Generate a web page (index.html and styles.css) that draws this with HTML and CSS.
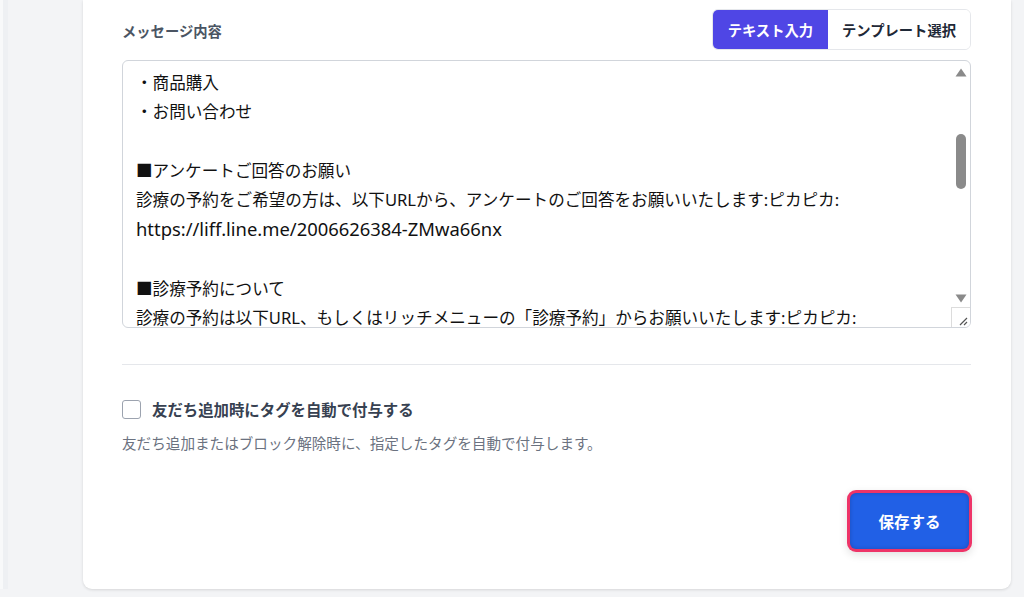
FILE: index.html
```html
<!DOCTYPE html>
<html lang="ja">
<head>
<meta charset="utf-8">
<link rel="stylesheet" href="styles.css">
</head>
<body>
<div class="page">
  <div class="edge"></div>
  <main class="card">
    <div class="field-head">
      <label class="field-label">メッセージ内容</label>
      <div class="toggle">
        <button class="seg active">テキスト入力</button>
        <button class="seg">テンプレート選択</button>
      </div>
    </div>
    <div class="textarea">
      <div class="text">・商品購入
・お問い合わせ

■アンケートご回答のお願い
診療の予約をご希望の方は、以下URLから、アンケートのご回答をお願いいたします:ピカピカ:
<span class="lat">https://liff.line.me/2006626384-ZMwa66nx</span>

■診療予約について
診療の予約は以下URL、もしくはリッチメニューの「診療予約」からお願いいたします:ピカピカ:</div>
      <div class="scrollbar">
        <svg class="arrow" width="12" height="9" viewBox="0 0 12 9"><path d="M6 0.5 L11.5 8.5 L0.5 8.5 Z" fill="#8a8a8a"/></svg>
        <div class="track"><div class="thumb"></div></div>
        <svg class="arrow" width="12" height="9" viewBox="0 0 12 9"><path d="M0.5 0.5 L11.5 0.5 L6 8.5 Z" fill="#8a8a8a"/></svg>
      </div>
      <div class="resizer">
        <svg width="19" height="20" viewBox="0 0 19 20"><path d="M8 17 L15 10 M12 17 L15 14" stroke="#555" stroke-width="1.2" fill="none"/></svg>
      </div>
    </div>
    <hr class="divider">
    <div class="check-row">
      <span class="checkbox"></span>
      <span class="check-label">友だち追加時にタグを自動で付与する</span>
    </div>
    <p class="help">友だち追加またはブロック解除時に、指定したタグを自動で付与します。</p>
    <div class="actions">
      <button class="save">保存する</button>
    </div>
  </main>
</div>
</body>
</html>
```

FILE: styles.css
```css
* { box-sizing: border-box; }
html, body { margin: 0; padding: 0; }
body {
  background: #f3f4f6;
  font-family: "Noto Sans", "Noto Sans CJK JP", sans-serif;
  color: #111827;
  width: 1024px;
  height: 597px;
  overflow: hidden;
}
.page {
  display: flex;
  height: 597px;
  padding: 0 13px 8px 0;
}
.edge {
  width: 8px;
  border-left: 3px solid #f8f9fa;
  background: #eef0f3;
  margin-right: 75px;
}
.card {
  flex: 1;
  background: #fff;
  border-radius: 0 0 9px 9px;
  box-shadow: 0 1px 3px rgba(0,0,0,0.12);
  padding: 9px 40px 0 39px;
  display: flex;
  flex-direction: column;
}
.field-head {
  display: flex;
  justify-content: space-between;
  align-items: center;
  height: 41px;
}
.field-label {
  font-family: "Noto Sans CJK JP", sans-serif;
  font-size: 14.3px;
  font-weight: 600;
  color: #4b5563;
  padding-top: 2px;
}
.toggle {
  display: flex;
  height: 41px;
  border: 1px solid #e5e7eb;
  border-radius: 6px;
  overflow: hidden;
}
.seg {
  font-family: "Noto Sans CJK JP", sans-serif;
  font-size: 14.3px;
  font-weight: 600;
  border: 0;
  background: #fff;
  color: #1f2937;
  padding: 0 14px;
  margin: 0;
}
.seg.active {
  background: #4f46e5;
  color: #fff;
  padding: 0 15px;
}
.textarea {
  margin-top: 10px;
  height: 268px;
  border: 1px solid #d1d5db;
  border-radius: 6px;
  position: relative;
  overflow: hidden;
}
.text {
  white-space: pre;
  font-family: "Noto Sans", "Noto Sans CJK JP", sans-serif;
  font-size: 16.6px;
  line-height: 29.25px;
  color: #111;
  padding: 7px 40px 0 13px;
}
.lat { font-size: 18.4px; }
.scrollbar {
  position: absolute;
  top: 0;
  right: 0;
  width: 18px;
  bottom: 20px;
  display: flex;
  flex-direction: column;
  align-items: center;
  padding: 7px 0 4px;
}
.track {
  flex: 1;
  width: 100%;
  padding-top: 57px;
  display: flex;
  justify-content: center;
}
.thumb {
  width: 10px;
  height: 55px;
  border-radius: 5px;
  background: #8a8a8a;
}
.resizer {
  position: absolute;
  right: 0;
  bottom: 0;
  width: 19px;
  height: 20px;
  border-left: 1px solid #dcdcdc;
  border-top: 1px solid #dcdcdc;
  background: #fff;
}
.resizer svg { display: block; }
.divider {
  border: 0;
  border-top: 1px solid #e5e7eb;
  margin: 36px 0 0;
}
.check-row {
  display: flex;
  align-items: center;
  gap: 11px;
  margin-top: 33px;
}
.checkbox {
  width: 19px;
  height: 19px;
  border: 1px solid #9ca3af;
  border-radius: 3px;
  background: #fff;
}
.check-label {
  font-family: "Noto Sans CJK JP", sans-serif;
  font-size: 15.4px;
  font-weight: 600;
  color: #374151;
}
.help {
  margin: 12px 0 0;
  font-family: "Noto Sans CJK JP", sans-serif;
  font-size: 14.6px;
  color: #6b7280;
}
.actions {
  display: flex;
  justify-content: flex-end;
  margin-top: 40px;
  padding-right: 2px;
}
.save {
  width: 119px;
  height: 56px;
  border: 0;
  border-radius: 6px;
  background: #2160e6;
  color: #fff;
  font-family: "Noto Sans CJK JP", sans-serif;
  font-size: 15.5px;
  font-weight: 700;
  box-shadow: 0 0 0 3px #ee3468, 0 3px 8px 3px rgba(0,0,0,0.12), inset 0 0 4px rgba(0,0,0,0.2);
}
```
